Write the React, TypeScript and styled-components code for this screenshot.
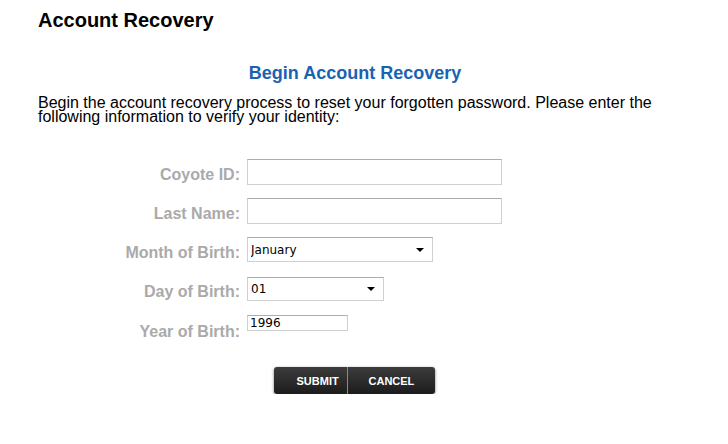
import styled, { createGlobalStyle } from "styled-components";

const GlobalStyle = createGlobalStyle`
  body {
    margin: 0;
    background: #ffffff;
    font-family: "Liberation Sans", Arial, sans-serif;
    color: #000000;
  }
`;

const Page = styled.div`
  padding: 0 0 0 38px;
`;

const Heading = styled.h1`
  margin: 9px 0 0;
  font-size: 20px;
  line-height: 23px;
  font-weight: bold;
`;

const Container = styled.div`
  width: 634px;
  margin-top: 31px;
`;

const Title = styled.h2`
  margin: 0;
  text-align: center;
  font-size: 18px;
  line-height: 21px;
  font-weight: bold;
  color: #1863b4;
`;

const Intro = styled.p`
  margin: 12px 0 0;
  font-size: 16px;
  line-height: 14px;
`;

const Form = styled.form`
  margin-top: 28px;
  display: flex;
  flex-direction: column;
`;

const Row = styled.div<{ $top?: boolean }>`
  display: grid;
  grid-template-columns: 202px auto;
  column-gap: 7px;
  height: 39px;
  align-items: ${(p) => (p.$top ? "start" : "center")};
  padding-top: ${(p) => (p.$top ? "7px" : "0")};
  box-sizing: border-box;
`;

const Label = styled.label<{ $drop?: boolean }>`
  text-align: right;
  font-size: 16px;
  font-weight: bold;
  color: #aaaaaa;
  margin-top: ${(p) => (p.$drop ? "8px" : "6px")};
`;

const TextInput = styled.input<{ $w: number; $h: number }>`
  box-sizing: border-box;
  width: ${(p) => p.$w}px;
  height: ${(p) => p.$h}px;
  margin: 0;
  padding: 0 2px;
  border: 1px solid #d0d0d0;
  border-top-color: #acacac;
  background: #ffffff;
  font-family: "DejaVu Sans", Tahoma, sans-serif;
  font-size: 12px;
  color: #000000;
  outline: none;
`;

const SelectWrap = styled.div<{ $w: number; $h: number }>`
  position: relative;
  width: ${(p) => p.$w}px;
  height: ${(p) => p.$h}px;

  &::after {
    content: "";
    position: absolute;
    right: 9px;
    top: 50%;
    margin-top: -2px;
    border-left: 4px solid transparent;
    border-right: 4px solid transparent;
    border-top: 4px solid #000000;
    pointer-events: none;
  }
`;

const Select = styled.select`
  appearance: none;
  -webkit-appearance: none;
  box-sizing: border-box;
  width: 100%;
  height: 100%;
  margin: 0;
  padding: 0 3px;
  border: 1px solid #d0d0d0;
  border-top-color: #acacac;
  border-radius: 0;
  background: #ffffff;
  font-family: "DejaVu Sans", Tahoma, sans-serif;
  font-size: 12px;
  color: #000000;
  outline: none;
`;

const Actions = styled.div`
  margin-top: 20px;
  display: flex;
  justify-content: center;
  padding-right: 2px;
`;

const ButtonGroup = styled.div`
  display: flex;
  border-radius: 3px;
  box-shadow: 0 1px 3px rgba(0, 0, 0, 0.55);
  overflow: hidden;
`;

const Button = styled.button<{ $w: number; $pl: number }>`
  box-sizing: border-box;
  width: ${(p) => p.$w}px;
  height: 27px;
  margin: 0;
  padding: 0 0 0 ${(p) => p.$pl}px;
  text-align: left;
  border: none;
  background: linear-gradient(#3c3c3c, #1c1c1c);
  color: #ffffff;
  font-family: "Liberation Sans", Arial, sans-serif;
  font-size: 11px;
  font-weight: bold;
  cursor: pointer;

  & + & {
    border-left: 1px solid #8a8a8a;
  }
`;

const months = [
  "January", "February", "March", "April", "May", "June",
  "July", "August", "September", "October", "November", "December",
];

const days = Array.from({ length: 31 }, (_, i) => String(i + 1).padStart(2, "0"));

export default function App() {
  return (
    <Page>
      <GlobalStyle />
      <Heading>Account Recovery</Heading>
      <Container>
        <Title>Begin Account Recovery</Title>
        <Intro>
          Begin the account recovery process to reset your forgotten password.
          Please enter the following information to verify your identity:
        </Intro>
        <Form onSubmit={(e) => e.preventDefault()}>
          <Row>
            <Label>Coyote ID:</Label>
            <TextInput $w={255} $h={26} />
          </Row>
          <Row>
            <Label>Last Name:</Label>
            <TextInput $w={255} $h={26} />
          </Row>
          <Row>
            <Label>Month of Birth:</Label>
            <SelectWrap $w={186} $h={25}>
              <Select defaultValue="January">
                {months.map((m) => (
                  <option key={m}>{m}</option>
                ))}
              </Select>
            </SelectWrap>
          </Row>
          <Row>
            <Label>Day of Birth:</Label>
            <SelectWrap $w={137} $h={24}>
              <Select defaultValue="01">
                {days.map((d) => (
                  <option key={d}>{d}</option>
                ))}
              </Select>
            </SelectWrap>
          </Row>
          <Row $top>
            <Label $drop>Year of Birth:</Label>
            <TextInput $w={101} $h={16} defaultValue="1996" />
          </Row>
          <Actions>
            <ButtonGroup>
              <Button type="submit" $w={73} $pl={23}>SUBMIT</Button>
              <Button type="button" $w={88} $pl={21}>CANCEL</Button>
            </ButtonGroup>
          </Actions>
        </Form>
      </Container>
    </Page>
  );
}
